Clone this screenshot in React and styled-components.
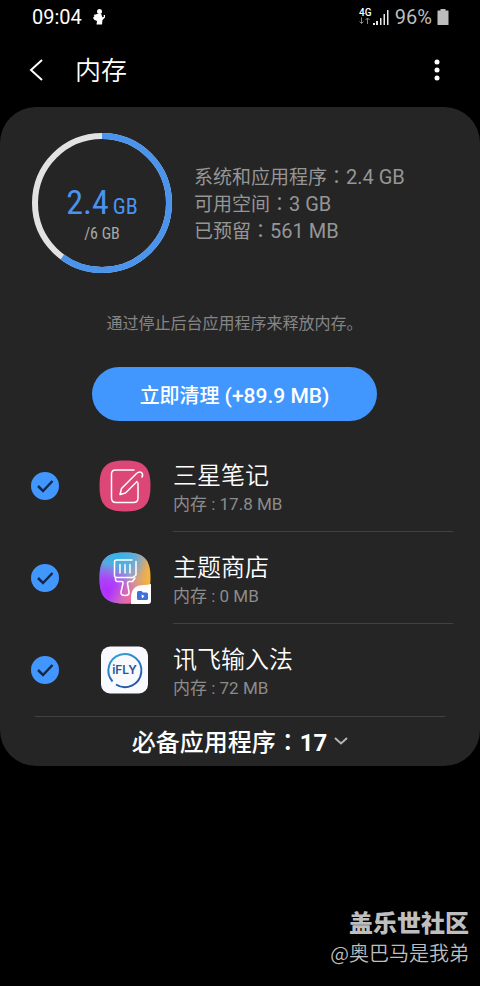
import React, { useState } from 'react';
import styled, { createGlobalStyle } from 'styled-components';

const apps = [
    { id: 'notes', name: '三星笔记', memory: '17.8 MB', Icon: NotesIcon },
    { id: 'themes', name: '主题商店', memory: '0 MB', Icon: ThemesIcon },
    { id: 'ifly', name: '讯飞输入法', memory: '72 MB', Icon: IflyIcon },
];

const stats = [
    { label: '系统和应用程序', value: '2.4 GB' },
    { label: '可用空间', value: '3 GB' },
    { label: '已预留', value: '561 MB' },
];

function NotesIcon() {
    return (
        <svg width="52" height="52" viewBox="0 0 52 52" aria-hidden="true">
            <path d="M26 0.5C45 0.5 51.5 7 51.5 26S45 51.5 26 51.5 0.5 45 0.5 26 7 0.5 26 0.5Z" fill="#dc4778" />
            <g fill="none" stroke="#fff" strokeWidth="1.5" strokeLinecap="round" strokeLinejoin="round">
                <path d="M35 10H16.500Q12.500 10 12.500 14V38Q12.500 42.500 17 42.500H34.500Q39 42.500 39 38V23" />
                <path d="M21 34.500L22.500 28.500L37.500 13.500Q40.500 11 42.500 12.500Q44.500 14.500 43 17M38 21.500L26.500 33L21 34.500" />
            </g>
        </svg>
    );
}

function ThemesIcon() {
    return (
        <svg width="52" height="52" viewBox="0 0 52 52" aria-hidden="true">
            <defs>
                <linearGradient id="themeBase" x1="0" y1="0.4" x2="1" y2="0.6">
                    <stop offset="0" stopColor="#7b62f0" />
                    <stop offset="0.5" stopColor="#b28cc8" />
                    <stop offset="1" stopColor="#fdb92c" />
                </linearGradient>
                <radialGradient id="themeTop" cx="0.35" cy="0" r="0.65">
                    <stop offset="0" stopColor="#2fb5e6" />
                    <stop offset="0.5" stopColor="#50b2e0" stopOpacity="0.9" />
                    <stop offset="1" stopColor="#62b8e0" stopOpacity="0" />
                </radialGradient>
                <radialGradient id="themeLeft" cx="0.15" cy="0.75" r="0.55">
                    <stop offset="0" stopColor="#b32cff" />
                    <stop offset="0.4" stopColor="#b03cfc" stopOpacity="0.9" />
                    <stop offset="1" stopColor="#c04ce8" stopOpacity="0" />
                </radialGradient>
                <radialGradient id="themeBottom" cx="0.65" cy="1" r="0.5">
                    <stop offset="0" stopColor="#f4609c" />
                    <stop offset="1" stopColor="#f4709c" stopOpacity="0" />
                </radialGradient>
            </defs>
            {['themeBase', 'themeTop', 'themeLeft', 'themeBottom'].map(fill => (
                <path
                    key={fill}
                    d="M26 0.5C45 0.5 51.5 7 51.5 26S45 51.5 26 51.5 0.5 45 0.5 26 7 0.5 26 0.5Z"
                    fill={`url(#${fill})`}
                />
            ))}
            <g fill="none" stroke="#fff" strokeWidth="1.5" strokeLinecap="round" strokeLinejoin="round">
                <path d="M33 8H17.500Q15.500 8 15.500 10V23.500Q15.500 25.500 17.500 25.500H34L37 23V9.500" />
                <path d="M21 12.500V21M26 12.500V21M31 12.500V21" />
                <path d="M16.500 26V27.500Q16.500 29.500 18.500 29.500H22.500Q24.500 29.500 24 31.500L22 40Q21.500 43.500 26 43.500Q30.500 43.500 30 40L28.500 31.500Q28.500 29.500 30.500 29.500H33.500L36 26" />
            </g>
            <path d="M32 52V46Q32 33 45 33Q49 33 52 32V49Q52 52 49 52Z" fill="#fff" />
            <path d="M38 40.500Q38 39 39.500 39H42.500L44 40.500H47.500Q49 40.500 49 42V46.500Q49 48 47.500 48H39.500Q38 48 38 46.500Z" fill="#4070d8" />
            <path d="M42.500 42.500L45.500 44L43 46.500Z" fill="#fff" />
        </svg>
    );
}

function IflyIcon() {
    return (
        <svg width="52" height="52" viewBox="0 0 52 52" aria-hidden="true">
            <defs>
                <linearGradient id="iflyRing" x1="0" y1="0" x2="0.4" y2="1">
                    <stop offset="0" stopColor="#35a5d8" />
                    <stop offset="1" stopColor="#2356a5" />
                </linearGradient>
            </defs>
            <rect x="2" y="2.500" width="47" height="47" rx="9" fill="#f8faff" />
            <path d="M13.500 37.500A16.500 16.500 0 1 1 17 40.500" fill="none" stroke="url(#iflyRing)" strokeWidth="2" />
            <text x="25.500" y="30" textAnchor="middle" fill="#285593" fontFamily="Inter, sans-serif" fontWeight="600" fontSize="12">iFLY</text>
        </svg>
    );
}

function UsageRing({ share }) {
    const length = 2 * Math.PI * 67;
    return (
        <Ring>
            <svg width="140" height="140" viewBox="0 0 140 140" aria-hidden="true">
                <g fill="none" strokeWidth="6" transform="rotate(-90 70 70)">
                    <circle cx="70" cy="70" r="67" stroke="#e2e2e2" />
                    <circle cx="70" cy="70" r="67" stroke="#4a94ee" strokeDasharray={`${length * share} ${length}`} />
                </g>
            </svg>
            <RingText>
                <Used>2.4<small>GB</small></Used>
                <Total>/6 GB</Total>
            </RingText>
        </Ring>
    );
}

function AppRow({ app, checked, onToggle }) {
    const { id, name, memory, Icon } = app;
    return (
        <Row>
            <Check>
                <input type="checkbox" id={id} checked={checked} onChange={onToggle} />
                <svg width="28" height="28" viewBox="0 0 28 28" aria-hidden="true">
                    <path d="M7 14L12 19L21.500 9" fill="none" stroke="#14294a" strokeWidth="2.5" />
                </svg>
            </Check>
            <Icon />
            <Info htmlFor={id}>
                <AppName>{name}</AppName>
                <AppMemory>内存 : {memory}</AppMemory>
            </Info>
        </Row>
    );
}

function App() {
    const [selected, setSelected] = useState(apps.map(app => app.id));

    const toggle = (id) => {
        setSelected(selected.includes(id) ? selected.filter(item => item !== id) : [...selected, id]);
    };

    return (
        <Page>
            <GlobalStyle />
            <StatusBar>
                <span>09:04</span>
                <svg width="14" height="18" viewBox="0 0 14 18" fill="#fff" aria-hidden="true">
                    <circle cx="7.500" cy="3.500" r="2.500" />
                    <path d="M5 6L9 5.500L10.500 9.500L12 8.500L11.500 7H13V9.500L10.500 12L10 16.500H4.500L5 13L2.500 12L1 10L2.500 8L1.500 7Z" />
                </svg>
                <StatusRight>
                    <svg width="32" height="18" viewBox="0 0 32 18" aria-hidden="true">
                        <text x="1" y="8" fill="#fff" fontFamily="Roboto, sans-serif" fontWeight="500" fontSize="10">4G</text>
                        <path d="M3.500 9.500V15.500M1.500 13.500L3.500 15.500L5.500 13.500M9.500 16V10M7.500 12L9.500 10L11.500 12" fill="none" stroke="#888" />
                        <path d="M15 17H17V15H15ZM18 17H20V13H18ZM22 17H23.500V10H22ZM25.500 17H27V6H25.500ZM29 17H30.500V2H29Z" fill="#e8e8e8" />
                    </svg>
                    <span>96%</span>
                    <svg width="12" height="18" viewBox="0 0 12 18" fill="#bdbdbd" aria-hidden="true">
                        <path d="M3.500 1H8.500V2.500H11Q11.500 2.500 11.500 3V16.500Q11.500 17 11 17H1Q0.500 17 0.500 16.500V3Q0.500 2.500 1 2.500H3.500Z" />
                    </svg>
                </StatusRight>
            </StatusBar>

            <Header>
                <IconButton aria-label="返回">
                    <svg width="24" height="24" viewBox="0 0 24 24" aria-hidden="true">
                        <path d="M18 2L7 12L18 22" fill="none" stroke="#fff" strokeWidth="2" />
                    </svg>
                </IconButton>
                <Title>内存</Title>
                <IconButton aria-label="更多选项">
                    <svg width="24" height="24" viewBox="0 0 24 24" fill="#fff" aria-hidden="true">
                        <circle cx="12" cy="4" r="2.500" />
                        <circle cx="12" cy="12" r="2.500" />
                        <circle cx="12" cy="20" r="2.500" />
                    </svg>
                </IconButton>
            </Header>

            <Card>
                <Summary>
                    <UsageRing share={0.6} />
                    <Stats>
                        {stats.map(item => (
                            <li key={item.label}>
                                {item.label}<Colon>：</Colon><Value>{item.value}</Value>
                            </li>
                        ))}
                    </Stats>
                </Summary>
                <Action>
                    <Hint>通过停止后台应用程序来释放内存。</Hint>
                    <CleanButton>立即清理 <span>(+89.9 MB)</span></CleanButton>
                </Action>
                <AppList>
                    {apps.map(app => (
                        <AppRow
                            key={app.id}
                            app={app}
                            checked={selected.includes(app.id)}
                            onToggle={() => toggle(app.id)}
                        />
                    ))}
                </AppList>
                <Essential>
                    <span>必备应用程序<Colon>：</Colon><b>17</b></span>
                    <svg width="14" height="10" viewBox="0 0 14 10" aria-hidden="true">
                        <path d="M1 2L7 7.500L13 2" fill="none" stroke="#b5b5b5" strokeWidth="2" />
                    </svg>
                </Essential>
            </Card>

            <Credit>
                <strong>盖乐世社区</strong>
                <span>@奥巴马是我弟</span>
            </Credit>
        </Page>
    );
}

export default App;

const GlobalStyle = createGlobalStyle`
   * {
    box-sizing: border-box;
   }

   body {
    margin: 0;
    background: #000;
    color: #fff;
    font-family: Roboto, "Noto Sans CJK SC", sans-serif;
   }

   button {
    border: 0;
    background: none;
    color: inherit;
    font-family: inherit;
    cursor: pointer;
   }

   ul {
    margin: 0;
    padding: 0;
    list-style: none;
   }

   svg {
    display: block;
    flex: none;
   }
`

const Page = styled.main`
   display: flex;
   flex-direction: column;
   min-height: 100vh;
`

const StatusBar = styled.div`
   display: flex;
   align-items: center;
   gap: 10px;
   height: 33px;
   padding: 0 31px 0 32px;
   font-size: 20px;
`

const StatusRight = styled.div`
   display: flex;
   align-items: center;
   gap: 5px;
   margin-left: auto;
   color: #bdbdbd;
`

const Header = styled.header`
   display: flex;
   align-items: center;
   height: 74px;
   padding: 0 23px 0 16px;
`

const IconButton = styled.button`
   display: grid;
   place-items: center;
   width: 40px;
   height: 40px;
   padding: 0;
`

const Title = styled.h1`
   flex: 1;
   margin: 0;
   padding: 2px 0 0 19px;
   font-size: 26px;
   font-weight: 350;
   line-height: 40px;
`

const Card = styled.section`
   padding-top: 26px;
   border-radius: 36px;
   background: #252525;
`

const Summary = styled.div`
   display: flex;
   align-items: center;
   gap: 22px;
   padding: 0 32px;
`

const Ring = styled.div`
   display: grid;
   place-items: center;

   > * {
    grid-area: 1 / 1;
   }
`

const RingText = styled.div`
   padding-top: 24px;
   font-family: "Roboto Condensed", "Liberation Sans Narrow", Roboto, sans-serif;
   text-align: center;
`

const Used = styled.div`
   display: flex;
   align-items: baseline;
   gap: 4px;
   margin-bottom: 2px;
   color: #4a94ee;
   font-size: 34px;
   line-height: 36px;

   small {
    font-size: 22px;
    line-height: 24px;
   }
`

const Total = styled.div`
   color: #a8a8a8;
   font-size: 16px;
   line-height: 24px;
`

const Stats = styled.ul`
   padding-top: 2px;
   color: #969696;
   font-size: 19px;
   line-height: 27px;

   li {
    height: 27px;
   }
`

// The Traditional face centres the full-width colon in its box
const Colon = styled.span`
   font-family: "Noto Sans CJK TC", sans-serif;
   line-height: 1;
`

const Value = styled.span`
   font-size: 20px;
   line-height: 1;
`

const Action = styled.div`
   display: flex;
   flex-direction: column;
   align-items: center;
   gap: 31px;
   padding: 39px 43px 19px 32px;
`

const Hint = styled.p`
   margin: 0;
   color: #858585;
   font-size: 16px;
   line-height: 24px;
`

const CleanButton = styled.button`
   width: 285px;
   max-width: 100%;
   height: 54px;
   border-radius: 27px;
   && {
    background: #4297ff;
   }
   font-size: 20px;
   font-weight: 500;

   span {
    font-size: 21px;
   }
`

const AppList = styled.ul`
   padding: 0 27px 0 31px;
`

const Row = styled.li`
   display: flex;
   align-items: center;
   height: 92px;
`

const Check = styled.span`
   display: grid;
   margin-right: 40px;

   > * {
    grid-area: 1 / 1;
   }

   svg {
    pointer-events: none;
   }

   input {
    appearance: none;
    width: 28px;
    height: 28px;
    margin: 0;
    border: 2px solid #4297ff;
    border-radius: 50%;
   }

   input:checked {
    background: #4297ff;
   }

   input:not(:checked) + svg {
    visibility: hidden;
   }
`

const Info = styled.label`
   display: flex;
   flex: 1;
   flex-direction: column;
   justify-content: center;
   height: 92px;
   margin-left: 22px;
   padding-top: 5px;
   border-bottom: 1px solid #414141;

   li:last-child > & {
    border-bottom-color: transparent;
   }
`

const AppName = styled.span`
   font-size: 24px;
   font-weight: 350;
   line-height: 32px;
`

const AppMemory = styled.span`
   color: #8c8c8c;
   font-size: 17px;
   line-height: 24px;
`

const Essential = styled.button`
   display: flex;
   align-items: center;
   justify-content: center;
   gap: 7px;
   width: calc(100% - 70px);
   height: 50px;
   margin: 0 35px;
   padding: 0 0 2px;
   && {
    border-top: 1px solid #414141;
   }
   font-size: 24px;
   font-weight: 500;
`

const Credit = styled.footer`
   display: flex;
   flex-direction: column;
   align-items: flex-end;
   margin-top: auto;
   padding: 0 11px 18px;
   color: #bebebe;
   font-family: "Noto Sans CJK SC", sans-serif;

   strong {
    font-size: 24px;
    font-weight: 900;
    line-height: 32px;
   }

   span {
    font-size: 20px;
    font-weight: 350;
    line-height: 30px;
   }
`
